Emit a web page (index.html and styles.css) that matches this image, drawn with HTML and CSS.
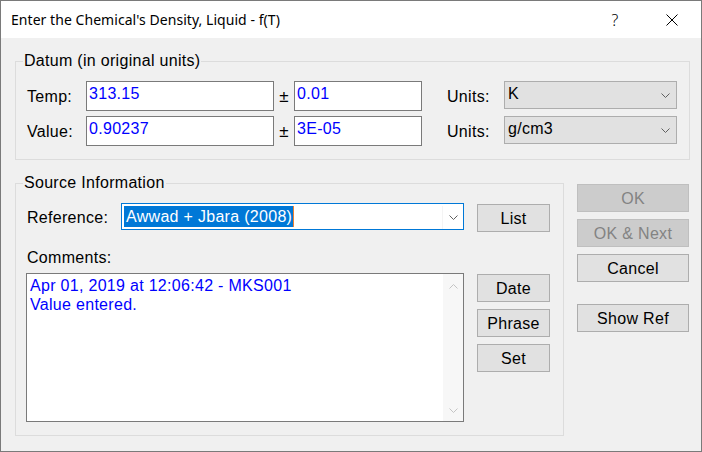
FILE: index.html
```html
<!DOCTYPE html>
<html>
<head>
<meta charset="utf-8">
<link rel="stylesheet" href="styles.css">
</head>
<body>
<div class="window">
  <div class="titlebar">
    <div class="title">Enter the Chemical's Density, Liquid - f(T)</div>
    <div class="tb-btn help">?</div>
    <div class="tb-btn close">
      <svg width="12" height="12" viewBox="0 0 12 12"><path d="M0.5 0.5 L11.5 11.5 M11.5 0.5 L0.5 11.5" stroke="#000" stroke-width="1" fill="none"/></svg>
    </div>
  </div>
  <div class="body">
    <fieldset class="group datum">
      <legend>Datum (in original units)</legend>
      <div class="datum-grid">
        <span class="lbl">Temp:</span>
        <div class="field">313.15</div>
        <span class="pm">±</span>
        <div class="field">0.01</div>
        <span></span>
        <span class="lbl">Units:</span>
        <div class="combo"><span class="combo-text">K</span><svg class="chev" width="9" height="5" viewBox="0 0 9 5"><path d="M0.5 0.5 L4.5 4.5 L8.5 0.5" stroke="#606060" fill="none"/></svg></div>

        <span class="lbl">Value:</span>
        <div class="field">0.90237</div>
        <span class="pm">±</span>
        <div class="field">3E-05</div>
        <span></span>
        <span class="lbl">Units:</span>
        <div class="combo"><span class="combo-text">g/cm3</span><svg class="chev" width="9" height="5" viewBox="0 0 9 5"><path d="M0.5 0.5 L4.5 4.5 L8.5 0.5" stroke="#606060" fill="none"/></svg></div>
      </div>
    </fieldset>

    <div class="lower">
      <fieldset class="group source">
        <legend>Source Information</legend>
        <div class="source-grid">
          <span class="lbl ref-lbl">Reference:</span>
          <div class="ref-combo">
            <span class="ref-sel">Awwad + Jbara (2008)</span>
            <span class="ref-drop"><svg width="9" height="5" viewBox="0 0 9 5"><path d="M0.5 0.5 L4.5 4.5 L8.5 0.5" stroke="#606060" fill="none"/></svg></span>
          </div>
          <span></span>
          <button class="btn list-btn">List</button>

          <span class="lbl comments-lbl">Comments:</span>

          <div class="comments">
            <div class="comments-text">Apr 01, 2019 at 12:06:42 - MKS001<br>Value entered.</div>
            <div class="vscroll">
              <svg width="9" height="5" viewBox="0 0 9 5"><path d="M0.5 4.5 L4.5 0.5 L8.5 4.5" stroke="#c4c4c4" fill="none"/></svg>
              <svg width="9" height="5" viewBox="0 0 9 5"><path d="M0.5 0.5 L4.5 4.5 L8.5 0.5" stroke="#c4c4c4" fill="none"/></svg>
            </div>
          </div>
          <div class="side-btns">
            <button class="btn">Date</button>
            <button class="btn">Phrase</button>
            <button class="btn">Set</button>
          </div>
        </div>
      </fieldset>

      <div class="actions">
        <button class="btn disabled">OK</button>
        <button class="btn disabled">OK &amp; Next</button>
        <button class="btn">Cancel</button>
        <button class="btn show-ref">Show Ref</button>
      </div>
    </div>
  </div>
</div>
</body>
</html>
```

FILE: styles.css
```css
* { box-sizing: border-box; }

body {
  margin: 0;
  font-family: "Liberation Sans", Arial, sans-serif;
  font-size: 16px;
  letter-spacing: 0.3px;
  color: #000;
}

.window {
  width: 702px;
  height: 452px;
  border: 1px solid #7a7a7a;
  background: #f0f0f0;
  display: flex;
  flex-direction: column;
}

.titlebar {
  height: 37px;
  flex: none;
  background: #fff;
  display: flex;
  align-items: center;
  padding-left: 10px;
  padding-right: 6px;
  font-family: "Noto Sans", sans-serif;
  font-size: 14px;
  letter-spacing: 0.05px;
}

.title { flex: 1; }

.tb-btn {
  width: 46px;
  height: 37px;
  display: flex;
  align-items: center;
  justify-content: center;
}

.help {
  margin-right: 11px;
  font-size: 16px;
  font-weight: 300;
}

.body {
  flex: 1;
  padding: 14px 11px 0 14px;
  display: flex;
  flex-direction: column;
}

fieldset.group {
  margin: 0;
  border: 1px solid #dcdcdc;
  padding: 11px 12px 13px 10px;
  min-width: 0;
}

legend {
  line-height: 18px;
  padding: 0 1px;
  margin-left: -3px;
}

.lbl { padding-left: 1px; line-height: 18px; padding-top: 1px; }

.datum-grid {
  display: grid;
  grid-template-columns: 60px 188px 20px 128px 24px 58px 173px;
  grid-template-rows: 30px 30px;
  row-gap: 5px;
  align-items: center;
}

.field {
  height: 30px;
  background: #fff;
  border: 1px solid #7a7a7a;
  color: #0000ff;
  padding: 3px 2px 0;
  line-height: 18px;
  white-space: nowrap;
}

.pm { text-align: center; letter-spacing: 0; font-size: 17px; padding-top: 1px; }

.combo {
  align-self: start;
  height: 28px;
  background: #e1e1e1;
  border: 1px solid #adadad;
  display: flex;
  align-items: flex-start;
  padding: 3px 6px 0 3px;
  line-height: 18px;
}

.combo-text { flex: 1; }

.combo .chev { margin-top: 8px; }

.lower {
  display: flex;
  gap: 13px;
  margin-top: 14px;
  align-items: flex-start;
}

.source {
  width: 549px;
  flex: none;
}

fieldset.source { padding-right: 13px; }

.source-grid {
  display: grid;
  grid-template-columns: 95px 343px 13px 73px;
  grid-template-rows: 29px 41px 149px;
}

.ref-lbl { align-self: center; }

.ref-combo {
  align-self: start;
  height: 27px;
  border: 1px solid #0078d7;
  background: #fff;
  display: flex;
  align-items: flex-start;
  padding: 2px 0 0 2px;
}

.ref-sel {
  height: 21px;
  line-height: 21px;
  padding: 0 1px 0 2px;
  background: #0078d7;
  color: #fff;
  border-right: 1px solid #f08030;
}

.ref-drop {
  margin-left: auto;
  width: 21px;
  height: 23px;
  display: flex;
  align-items: center;
  justify-content: center;
  border-left: 1px solid #f4f4f4;
}

.btn {
  font-family: inherit;
  font-size: 16px;
  letter-spacing: 0.3px;
  color: #000;
  height: 28px;
  background: #e1e1e1;
  border: 1px solid #adadad;
  padding: 1px 0 0;
  margin: 0;
  line-height: 18px;
  text-align: center;
}

.btn.disabled {
  background: #cccccc;
  border-color: #bfbfbf;
  color: #838383;
}

.list-btn {
  align-self: start;
  margin-top: 1px;
}

.comments-lbl {
  grid-column: 1 / -1;
  align-self: end;
  margin-bottom: 6px;
}

.comments {
  grid-column: 1 / 3;
  border: 1px solid #7a7a7a;
  background: #fff;
  display: flex;
}

.comments-text {
  flex: 1;
  padding: 2px 3px;
  line-height: 19px;
  color: #0000ff;
}

.vscroll {
  width: 20px;
  background: #f7f7f7;
  display: flex;
  flex-direction: column;
  justify-content: space-between;
  align-items: center;
  padding: 10px 0 8px;
}

.side-btns {
  grid-column: 4;
  display: flex;
  flex-direction: column;
  gap: 7px;
  padding-top: 1px;
}

.actions {
  width: 112px;
  flex: none;
  display: flex;
  flex-direction: column;
  gap: 7px;
  padding-top: 10px;
}

.show-ref { margin-top: 15px; }
```
